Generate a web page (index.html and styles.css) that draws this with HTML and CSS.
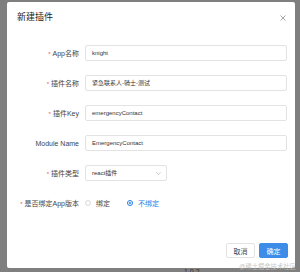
FILE: index.html
```html
<!DOCTYPE html>
<html lang="zh-CN">
<head>
    <meta charset="UTF-8">
    <meta name="viewport" content="width=device-width, initial-scale=1.0">
    <title>新建插件</title>
    <link rel="stylesheet" href="styles.css">
</head>
<body>
    <div class="modal">
        <div class="modal-header">
            <div class="modal-title">新建插件</div>
            <svg class="close-icon" width="6" height="6" viewBox="0 0 6 6">
                <path d="M0.5 0.5 L5.5 5.5 M5.5 0.5 L0.5 5.5" stroke="#9a9a9a" stroke-width="0.9" fill="none"/>
            </svg>
        </div>

        <div class="modal-body">
            <div class="form-row">
                <label class="form-label"><span class="required">*</span>App名称</label>
                <div class="input">knight</div>
            </div>
            <div class="form-row">
                <label class="form-label"><span class="required">*</span>插件名称</label>
                <div class="input">紧急联系人-骑士-测试</div>
            </div>
            <div class="form-row">
                <label class="form-label"><span class="required">*</span>插件Key</label>
                <div class="input">emergencyContact</div>
            </div>
            <div class="form-row">
                <label class="form-label">Module Name</label>
                <div class="input">EmergencyContact</div>
            </div>
            <div class="form-row">
                <label class="form-label"><span class="required">*</span>插件类型</label>
                <div class="input select">
                    <span>react插件</span>
                    <svg width="5" height="3" viewBox="0 0 5 3">
                        <path d="M0.3 0.3 L2.5 2.5 L4.7 0.3" stroke="#b5b5b5" stroke-width="0.7" fill="none"/>
                    </svg>
                </div>
            </div>
            <div class="form-row">
                <label class="form-label"><span class="required">*</span>是否绑定App版本</label>
                <div class="radio-group">
                    <span class="radio"><span class="radio-dot"></span>绑定</span>
                    <span class="radio checked"><span class="radio-dot"></span>不绑定</span>
                </div>
            </div>
        </div>

        <div class="modal-footer">
            <button class="btn">取消</button>
            <button class="btn btn-primary">确定</button>
        </div>
    </div>
    <div class="version">1.0.2</div>
    <div class="watermark">@稀土掘金技术社区</div>
</body>
</html>
```

FILE: styles.css
```css
body {
    margin: 0;
    height: 272px;
    overflow: hidden;
    position: relative;
    background-color: #7f7f7f;
    font-family: "Liberation Sans", "Noto Sans CJK SC", sans-serif;
    color: rgba(0, 0, 0, 0.85);
}
.modal {
    margin: 2px 0 0 7px;
    width: 288px;
    height: 266px;
    background-color: #fff;
    border-radius: 2px;
    display: flex;
    flex-direction: column;
}
.modal-header {
    display: flex;
    justify-content: space-between;
    align-items: center;
    padding: 9px 9px 0 10px;
    height: 13px;
}
.modal-title {
    font-size: 9px;
    line-height: 13px;
    color: #222;
}
.modal-body {
    display: flex;
    flex-direction: column;
    gap: 14.1px;
    padding: 21px 8px 0 0;
}
.form-row {
    display: flex;
    align-items: center;
    height: 16px;
}
.form-label {
    width: 72px;
    padding-right: 6px;
    text-align: right;
    font-size: 7px;
    color: #444;
    white-space: nowrap;
}
.required {
    color: #ff4d4f;
    margin-right: 2px;
    font-size: 6px;
}
.input {
    flex: 1;
    box-sizing: border-box;
    height: 16px;
    border: 1px solid #e3e3e3;
    border-radius: 2px;
    padding: 0 6px;
    font-size: 6px;
    line-height: 14px;
    color: #333;
}
.select {
    flex: none;
    width: 82px;
    display: flex;
    justify-content: space-between;
    align-items: center;
    padding-right: 5px;
}
.radio-group {
    display: flex;
    align-items: center;
    gap: 17px;
    font-size: 7px;
    color: #444;
}
.radio {
    display: flex;
    align-items: center;
    gap: 5px;
}
.radio-dot {
    box-sizing: border-box;
    width: 6px;
    height: 6px;
    border: 1px solid #d9d9d9;
    border-radius: 50%;
    position: relative;
}
.radio.checked {
    color: #1f7ee8;
}
.radio.checked .radio-dot {
    border-color: #1f7ee8;
}
.radio.checked .radio-dot::after {
    content: "";
    position: absolute;
    left: 1px;
    top: 1px;
    width: 2px;
    height: 2px;
    border-radius: 50%;
    background-color: #1f7ee8;
}
.modal-footer {
    margin-top: auto;
    display: flex;
    justify-content: flex-end;
    gap: 4px;
    padding: 0 7px 10px 0;
}
.btn {
    box-sizing: border-box;
    width: 29px;
    height: 15px;
    padding: 0;
    border: 1px solid #e3e3e3;
    border-radius: 2px;
    background-color: #fff;
    color: #444;
    font-family: inherit;
    font-size: 7px;
}
.btn-primary {
    background-color: #3d8ce8;
    border-color: #3d8ce8;
    color: #fff;
}
.version {
    margin-left: 184px;
    font-size: 7px;
    line-height: 8px;
    color: #333;
}
.watermark {
    position: absolute;
    left: 239px;
    top: 262px;
    font-size: 6.3px;
    color: rgba(190, 190, 190, 0.9);
    white-space: nowrap;
}
```
